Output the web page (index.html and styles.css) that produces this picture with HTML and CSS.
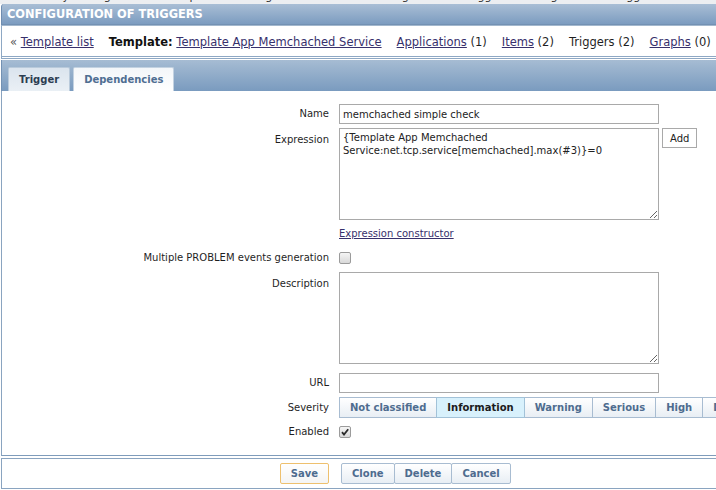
FILE: index.html
```html
<!DOCTYPE html>
<html lang="en">
<head>
  <meta charset="UTF-8">
  <meta name="viewport" content="width=device-width, initial-scale=1.0">
  <title>Configuration of triggers</title>
  <link rel="stylesheet" href="styles.css">
</head>
<body>
  <div class="history">
    <div>History: Configuration of templates » Configuration of items » Configuration of triggers » Configuration of triggers</div>
  </div>
  <div class="wrap">
    <div class="title">CONFIGURATION OF TRIGGERS</div>

    <div class="nav">
      <span><span class="raquo">«</span> <a href="#">Template list</a></span>
      <span><b>Template:</b> <a href="#">Template App Memchached Service</a></span>
      <span><a href="#">Applications</a> (1)</span>
      <span><a href="#">Items</a> (2)</span>
      <span>Triggers (2)</span>
      <span><a href="#">Graphs</a> (0)</span>
    </div>

    <div class="tabs">
      <a class="tab active" href="#">Trigger</a>
      <a class="tab" href="#">Dependencies</a>
    </div>

    <div class="form">
      <label class="lbl">Name</label>
      <div class="cell"><input class="text" type="text" value="memchached simple check"></div>

      <label class="lbl top">Expression</label>
      <div class="cell row">
        <textarea class="area">{Template App Memchached Service:net.tcp.service[memchached].max(#3)}=0</textarea>
        <button class="add">Add</button>
      </div>

      <div></div>
      <div class="cell link-row"><a href="#">Expression constructor</a></div>

      <label class="lbl">Multiple PROBLEM events generation</label>
      <div class="cell check-row"><span class="cbox"></span></div>

      <label class="lbl top">Description</label>
      <div class="cell area-cell"><textarea class="area"></textarea></div>

      <label class="lbl">URL</label>
      <div class="cell"><input class="text" type="text" value=""></div>

      <label class="lbl sev-lbl">Severity</label>
      <div class="cell severity">
        <button class="sev">Not classified</button>
        <button class="sev selected">Information</button>
        <button class="sev">Warning</button>
        <button class="sev">Serious</button>
        <button class="sev">High</button>
        <button class="sev">Disaster</button>
      </div>

      <label class="lbl">Enabled</label>
      <div class="cell check-row">
        <span class="cbox on">
          <svg width="10" height="10" viewBox="0 0 10 10"><path d="M2 5.2 L4 7.6 L8.2 2.2" fill="none" stroke="#2b2b2b" stroke-width="1.8"/></svg>
        </span>
      </div>
    </div>

    <div class="footer">
      <div class="save-cell"><button class="btn save">Save</button></div>
      <div class="btn-group">
        <button class="btn">Clone</button>
        <button class="btn">Delete</button>
        <button class="btn">Cancel</button>
      </div>
    </div>
  </div>
</body>
</html>
```

FILE: styles.css
```css
*{
  font-family: "DejaVu Sans", Verdana, sans-serif;
}
body{
  margin: 0;
  background: #fff;
  overflow: hidden;
  color: #1f1f1f;
}
a{
  color: #37306c;
}
.history{
  height: 4px;
  overflow: hidden;
  background: #eceef1;
}
.history div{
  margin-top: -10px;
  line-height: 14px;
  font-size: 11px;
  color: #333;
  padding-left: 30px;
  white-space: nowrap;
}
.wrap{
  width: 760px;
  margin-left: 1px;
}
.title{
  height: 20px;
  line-height: 20px;
  padding-left: 5px;
  border-left: 1px solid #6f8db0;
  border-bottom: 1px solid #7391b3;
  border-top-left-radius: 3px;
  background: linear-gradient(#a9bed5, #7c9cc0);
  color: #fff;
  font-size: 11.4px;
  font-weight: bold;
}
.nav{
  display: flex;
  gap: 15px;
  height: 28px;
  line-height: 28px;
  padding: 2px 0 0 8px;
  border-top: 1px solid #a3b8ce;
  border-bottom: 3px double #8ea8c4;
  border-left: 1px solid #8ea8c4;
  font-size: 11.5px;
  white-space: nowrap;
}
.nav b{
  color: #111;
}
.raquo{
  color: #555;
}
.tabs{
  display: flex;
  align-items: flex-end;
  gap: 3px;
  height: 24px;
  padding: 7px 0 0 6px;
  margin-top: 1px;
  border-left: 1px solid #7391b3;
  background: linear-gradient(#a6bcd3, #7a9bbf);
}
.tab{
  height: 23px;
  line-height: 23px;
  padding: 0 10px;
  border: 1px solid #c3d2e1;
  border-bottom: 0;
  border-radius: 2px 2px 0 0;
  background: linear-gradient(#f3f6f9, #fff);
  color: #4f6e92;
  font-size: 10px;
  font-weight: bold;
  text-decoration: none;
}
.tab.active{
  background: linear-gradient(#dbe4ee, #eaf0f5);
  border-color: #b9cadb;
  color: #2c3d51;
}
.form{
  display: grid;
  grid-template-columns: 327px 1fr;
  column-gap: 10px;
  row-gap: 4px;
  padding: 13px 0 13px;
  border-left: 1px solid #8aa4c0;
  border-bottom: 1px solid #7f9cbb;
}
.lbl{
  text-align: right;
  font-size: 10px;
  line-height: 20px;
  white-space: nowrap;
}
.lbl.top{
  padding-top: 2px;
}
.sev-lbl{
  line-height: 21px;
}
.cell{
  font-size: 10px;
}
.row{
  display: flex;
  align-items: flex-start;
}
.text{
  box-sizing: border-box;
  width: 320px;
  height: 20px;
  margin: 0;
  padding: 0 3px;
  border: 1px solid #a9a9a9;
  font-size: 10px;
  color: #222;
}
.area{
  display: block;
  box-sizing: border-box;
  width: 320px;
  height: 92px;
  margin: 0;
  padding: 3px 3px;
  border: 1px solid #a9a9a9;
  font-size: 10px;
  line-height: 12.5px;
  color: #222;
  resize: both;
}
.area-cell{
  padding-bottom: 5px;
}
.add{
  height: 20px;
  margin: 0 0 0 3px;
  padding: 0 7px;
  border: 1px solid #a9a9a9;
  background: #fff;
  font-size: 10px;
  color: #222;
}
.link-row{
  height: 20px;
  line-height: 20px;
}
.check-row{
  height: 19px;
  display: flex;
  align-items: center;
}
.cbox{
  box-sizing: border-box;
  width: 12px;
  height: 12px;
  border: 1px solid #9b9b9b;
  border-radius: 2px;
  background: linear-gradient(#f5f5f5, #d9d9d9);
  display: flex;
  align-items: center;
  justify-content: center;
}
.severity{
  display: flex;
  white-space: nowrap;
}
.sev, .btn{
  height: 21px;
  margin: 0;
  padding: 0 10px;
  border: 1px solid #a8bcd1;
  background: linear-gradient(#fff, #e8eef4);
  color: #4e6c8f;
  font-size: 10px;
  font-weight: bold;
}
.sev + .sev, .btn + .btn{
  margin-left: -1px;
}
.sev.selected{
  background: #d8f1fc;
  border-color: #a2c2d8;
  color: #1c1c1c;
  position: relative;
}
.footer{
  display: grid;
  grid-template-columns: 327px 1fr;
  column-gap: 12px;
  margin-top: 2px;
  padding: 4px 0;
  border-top: 1px solid #8aa4c0;
  border-bottom: 1px solid #8aa4c0;
  border-left: 1px solid #8aa4c0;
}
.save-cell{
  display: flex;
  justify-content: flex-end;
}
.btn{
  border-radius: 2px;
}
.btn.save{
  border-color: #eec06e;
  background: linear-gradient(#fff, #f4f4f4);
}
.btn-group{
  display: flex;
}
```
